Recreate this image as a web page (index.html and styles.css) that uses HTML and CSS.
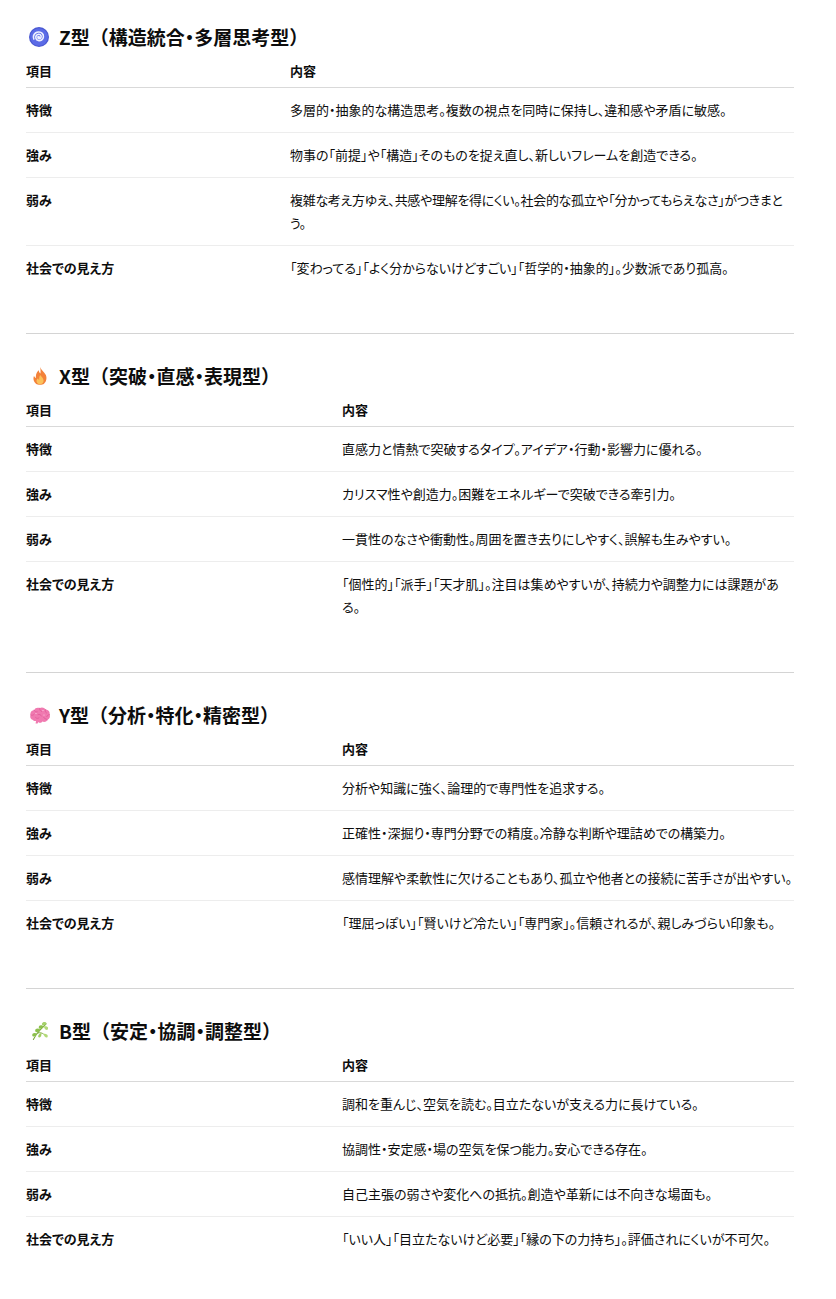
FILE: index.html
```html
<!DOCTYPE html>
<html lang="ja">
<head>
<meta charset="utf-8">
<link rel="stylesheet" href="styles.css">
</head>
<body>
<main class="page">

<section class="block">
  <h3 class="title">
    <svg class="emoji emoji-z" viewBox="0 0 20 20" width="20" height="20">
      <circle cx="10" cy="10" r="10" fill="#4a58d2"/>
      <circle cx="10" cy="10" r="8.8" fill="#5b6be6"/>
      <path d="M10.3 10.2 C10.3 9.2 9 9.2 8.9 10.2 C8.8 11.6 10.8 12 11.7 10.9 C12.8 9.5 11.9 7.3 9.9 7.2 C7.6 7.1 6.3 9.4 7 11.4 C7.8 13.6 10.7 14.3 12.6 13 C14.8 11.5 15 8.3 13.2 6.4 C11.5 4.6 8.4 4.5 6.5 6 C4.6 7.5 4.2 10.2 4.8 12" fill="none" stroke="#eef0ff" stroke-width="1.6" stroke-linecap="round"/>
    </svg>
    <span>Z型（構造統合<span class="dot">・</span>多層思考型）</span>
  </h3>
  <table class="tbl tbl-z">
    <thead><tr><th class="c1">項目</th><th class="c2">内容</th></tr></thead>
    <tbody>
      <tr><td class="c1">特徴</td><td class="c2">多層的・抽象的な構造思考。複数の視点を同時に保持し、違和感や矛盾に敏感。</td></tr>
      <tr><td class="c1">強み</td><td class="c2">物事の「前提」や「構造」そのものを捉え直し、新しいフレームを創造できる。</td></tr>
      <tr><td class="c1">弱み</td><td class="c2 tight">複雑な考え方ゆえ、共感や理解を得にくい。社会的な孤立や「分かってもらえなさ」がつきまとう。</td></tr>
      <tr><td class="c1">社会での見え方</td><td class="c2">「変わってる」「よく分からないけどすごい」「哲学的・抽象的」。少数派であり孤高。</td></tr>
    </tbody>
  </table>
</section>

<hr class="sep">

<section class="block">
  <h3 class="title">
    <svg class="emoji emoji-x" viewBox="0 0 20 22" width="18" height="22">
      <path d="M10 1 C11 4 15 6.5 16.5 10 C18 13.5 17 17.5 14.5 19.5 C12.5 21.2 7.5 21.2 5.5 19.5 C2.8 17.3 2 13.8 3.3 10.7 C3.9 12.3 4.8 13 5.6 13.2 C4.8 9.5 7 5.8 8.6 4.6 C8.8 6.5 9.5 7.6 10.5 8.2 C10.8 5.8 10.6 3 10 1 Z" fill="#f3823a"/>
      <path d="M10.2 10 C11.5 12 14 13.5 14 16.3 C14 18.6 12.2 20.2 10 20.2 C7.8 20.2 6 18.6 6.1 16.4 C6.2 14.8 7.1 13.9 7.9 13.4 C8 14.5 8.6 15.1 9.2 15.3 C9 13.5 9.3 11.5 10.2 10 Z" fill="#fbc25a"/>
    </svg>
    <span>X型（突破<span class="dot">・</span>直感<span class="dot">・</span>表現型）</span>
  </h3>
  <table class="tbl tbl-o">
    <thead><tr><th class="c1">項目</th><th class="c2">内容</th></tr></thead>
    <tbody>
      <tr><td class="c1">特徴</td><td class="c2">直感力と情熱で突破するタイプ。アイデア・行動・影響力に優れる。</td></tr>
      <tr><td class="c1">強み</td><td class="c2">カリスマ性や創造力。困難をエネルギーで突破できる牽引力。</td></tr>
      <tr><td class="c1">弱み</td><td class="c2">一貫性のなさや衝動性。周囲を置き去りにしやすく、誤解も生みやすい。</td></tr>
      <tr><td class="c1">社会での見え方</td><td class="c2">「個性的」「派手」「天才肌」。注目は集めやすいが、持続力や調整力には課題がある。</td></tr>
    </tbody>
  </table>
</section>

<hr class="sep">

<section class="block">
  <h3 class="title">
    <svg class="emoji emoji-y" viewBox="0 0 22 18" width="22" height="18">
      <path d="M4 14 C1.5 13.5 0.6 11 1.6 9 C0.8 6.5 2.6 4.2 5 4.2 C6 2 8.5 1.2 10.6 2.2 C12.6 0.9 15.5 1.5 16.6 3.5 C19.3 3.6 21.3 6 20.6 8.6 C21.6 10.6 20.6 13.2 18.4 13.8 C17.6 15.8 15.2 16.6 13.4 15.6 C12.6 17 10.4 17.3 9.3 16 L8.6 17.6 L6.6 17.6 L7 15 C5.6 15.3 4.4 14.8 4 14 Z" fill="#f07ab0"/>
      <path d="M5 4.2 C5.8 5.6 7 6 8.2 5.8 M10.6 2.2 C10.4 3.8 11.2 5 12.6 5.4 M16.6 3.5 C16 5 16.3 6.3 17.4 7 M1.6 9 C3 9.6 4.4 9.2 5.2 8.2 M20.6 8.6 C19.2 8.6 18.2 9.4 17.8 10.6 M9 8.6 C10.4 8 12 8.6 12.4 10 M6.6 11.6 C7.6 12.6 9.2 12.6 10 11.8 M14.4 11.2 C15.2 12.4 16.6 12.8 18.4 13.8" fill="none" stroke="#e05a98" stroke-width="0.8" stroke-linecap="round"/>
      <circle cx="7" cy="7.5" r="0.6" fill="#ffd0e6"/>
      <circle cx="14" cy="4.5" r="0.6" fill="#ffd0e6"/>
      <circle cx="15" cy="9" r="0.6" fill="#ffd0e6"/>
    </svg>
    <span>Y型（分析<span class="dot">・</span>特化<span class="dot">・</span>精密型）</span>
  </h3>
  <table class="tbl tbl-o">
    <thead><tr><th class="c1">項目</th><th class="c2">内容</th></tr></thead>
    <tbody>
      <tr><td class="c1">特徴</td><td class="c2">分析や知識に強く、論理的で専門性を追求する。</td></tr>
      <tr><td class="c1">強み</td><td class="c2">正確性・深掘り・専門分野での精度。冷静な判断や理詰めでの構築力。</td></tr>
      <tr><td class="c1">弱み</td><td class="c2">感情理解や柔軟性に欠けることもあり、孤立や他者との接続に苦手さが出やすい。</td></tr>
      <tr><td class="c1">社会での見え方</td><td class="c2">「理屈っぽい」「賢いけど冷たい」「専門家」。信頼されるが、親しみづらい印象も。</td></tr>
    </tbody>
  </table>
</section>

<hr class="sep">

<section class="block">
  <h3 class="title">
    <svg class="emoji emoji-b" viewBox="0 0 18 20" width="17" height="20">
      <path d="M2.5 19 C4.5 15 7 11.5 10 8.5 C12 6.5 14 4.5 16 2.5" fill="none" stroke="#7aa83a" stroke-width="1.1" stroke-linecap="round"/>
      <path d="M7.5 12 C9.5 11.5 11.5 12 13 13" fill="none" stroke="#7aa83a" stroke-width="1" stroke-linecap="round"/>
      <path d="M16.5 2 C15.6 -0.2 12.2 0 11.6 2.4 C11.2 4.4 13.8 5.2 16.5 2 Z" fill="#a5d16a"/>
      <path d="M13.4 5.6 C11.6 3.2 8.2 3.6 8.2 6.2 C8.2 8.2 11.4 8.4 13.4 5.6 Z" fill="#8cc04c"/>
      <path d="M13.6 5.2 C16.4 4.2 18.8 5.8 18 8 C17.2 10 14.4 8.8 13.6 5.2 Z" fill="#b2d978"/>
      <path d="M10 8.8 C7.8 6.6 4.4 7 4.4 9.8 C4.4 11.8 7.8 11.8 10 8.8 Z" fill="#8cc04c"/>
      <path d="M13 13 C15.8 12.2 18.4 13.8 17.6 16 C16.8 18 14 16.8 13 13 Z" fill="#b2d978"/>
      <path d="M10.8 12.2 C11.6 14.6 10.4 17.4 8.4 16.8 C6.6 16.2 7.8 13.4 10.8 12.2 Z" fill="#a0cc60"/>
      <path d="M6.6 13.2 C4.4 11.2 1.2 12 1.3 14.4 C1.4 16.4 4.6 16.2 6.6 13.2 Z" fill="#8cc04c"/>
    </svg>
    <span>B型（安定<span class="dot">・</span>協調<span class="dot">・</span>調整型）</span>
  </h3>
  <table class="tbl tbl-o">
    <thead><tr><th class="c1">項目</th><th class="c2">内容</th></tr></thead>
    <tbody>
      <tr><td class="c1">特徴</td><td class="c2">調和を重んじ、空気を読む。目立たないが支える力に長けている。</td></tr>
      <tr><td class="c1">強み</td><td class="c2">協調性・安定感・場の空気を保つ能力。安心できる存在。</td></tr>
      <tr><td class="c1">弱み</td><td class="c2">自己主張の弱さや変化への抵抗。創造や革新には不向きな場面も。</td></tr>
      <tr><td class="c1">社会での見え方</td><td class="c2">「いい人」「目立たないけど必要」「縁の下の力持ち」。評価されにくいが不可欠。</td></tr>
    </tbody>
  </table>
</section>

</main>
</body>
</html>
```

FILE: styles.css
```css
* { box-sizing: border-box; }

html, body {
  margin: 0;
  padding: 0;
  background: #ffffff;
}

body {
  font-family: "Noto Sans CJK JP", "Noto Sans", sans-serif;
  color: #0d0d0d;
}

.page {
  width: 768px;
  margin-left: 26px;
  padding-top: 24px;
  padding-bottom: 30px;
}

.title {
  display: flex;
  align-items: center;
  margin: 0;
  height: 26px;
  font-size: 19px;
  font-weight: 700;
  line-height: 26px;
}

.dot {
  font-feature-settings: "halt";
}

.emoji {
  flex: none;
  display: block;
}

.emoji-z { margin-left: 3px; margin-right: 10px; }
.emoji-x { margin-left: 5px; margin-right: 10px; }
.emoji-y { margin-left: 3px; margin-right: 8px; }
.emoji-b { margin-left: 5px; margin-right: 11px; }

.tbl {
  width: 768px;
  margin-top: 5px;
  border-collapse: collapse;
  table-layout: fixed;
  font-size: 13px;
  line-height: 23px;
  font-feature-settings: "palt";
}

.tbl th {
  text-align: left;
  font-weight: 700;
  padding: 4px 0 5px;
  border-bottom: 1px solid #d9d9d9;
}

.tbl td {
  padding: 10px 0 11px;
  border-bottom: 1px solid #ededed;
  vertical-align: top;
}

.tbl td.tight {
  letter-spacing: -0.3px;
}

.tbl tbody tr:last-child td {
  border-bottom: none;
}

.tbl td.c1 {
  font-weight: 700;
}

.tbl-z .c1 { width: 264px; }
.tbl-o .c1 { width: 316px; }

.sep {
  border: none;
  border-top: 1px solid #d4d4d4;
  margin: 43px 0 29px;
  height: 0;
}
```
